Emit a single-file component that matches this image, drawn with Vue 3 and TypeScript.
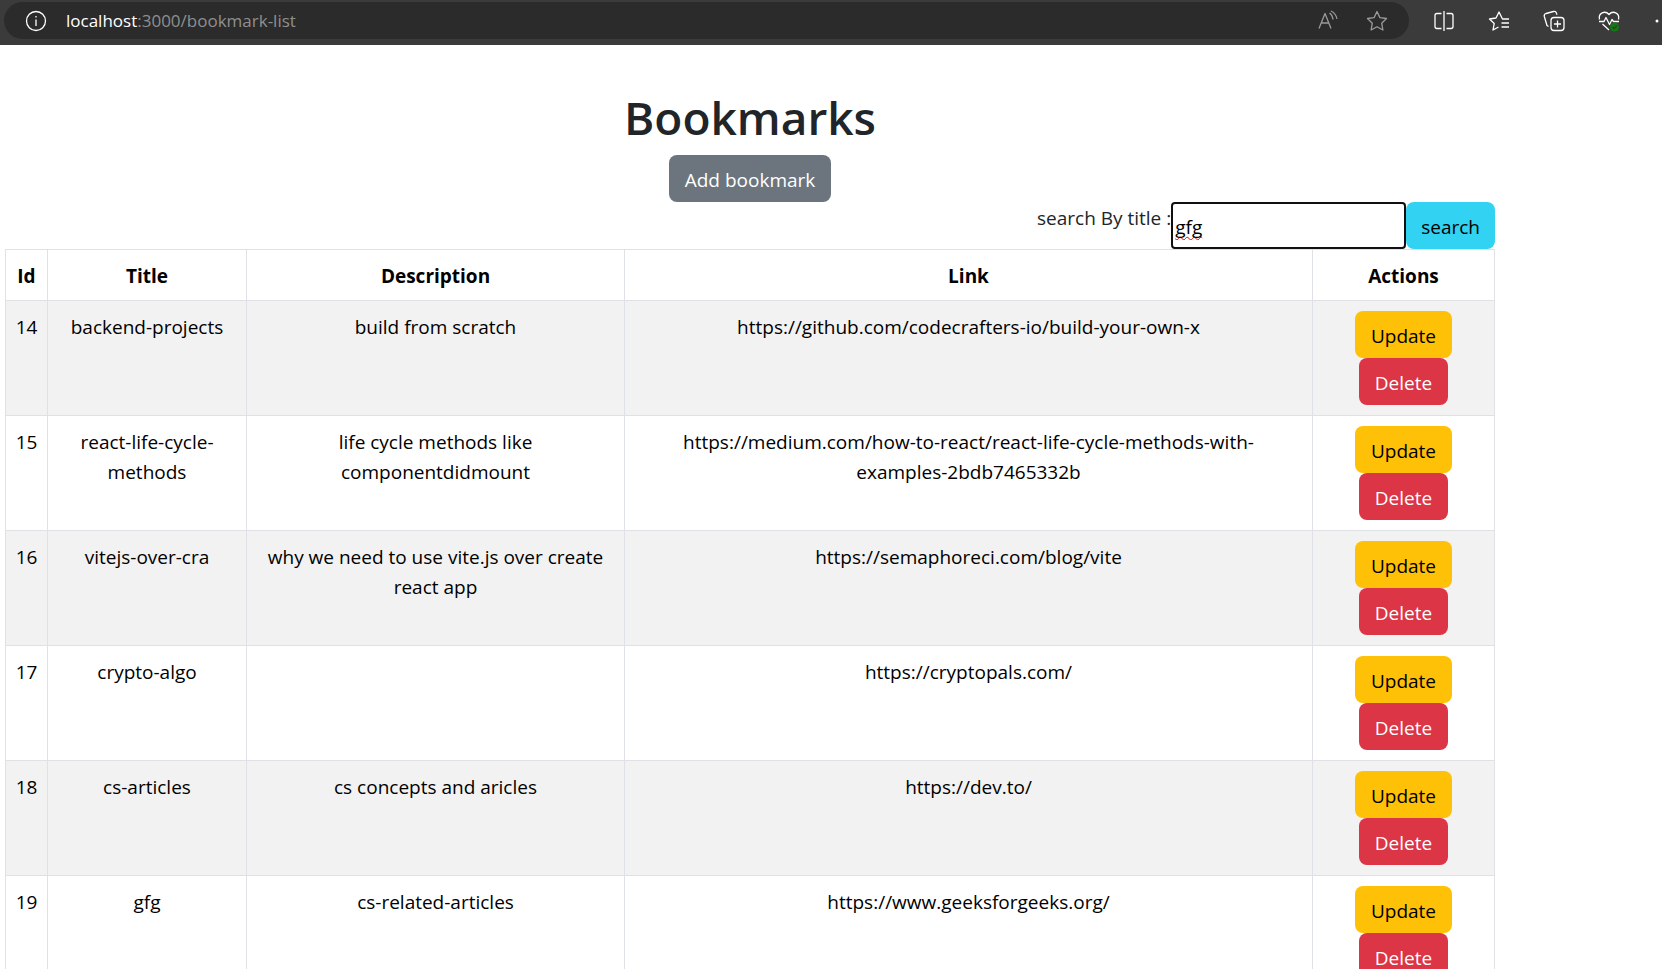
<script setup lang="ts">
import { ref } from 'vue'

interface Bookmark {
  id: number
  title: string
  description: string
  link: string
}

const query = ref('gfg')

const bookmarks = ref<Bookmark[]>([
  { id: 14, title: 'backend-projects', description: 'build from scratch', link: 'https://github.com/codecrafters-io/build-your-own-x' },
  { id: 15, title: 'react-life-cycle-methods', description: 'life cycle methods like componentdidmount', link: 'https://medium.com/how-to-react/react-life-cycle-methods-with-examples-2bdb7465332b' },
  { id: 16, title: 'vitejs-over-cra', description: 'why we need to use vite.js over create react app', link: 'https://semaphoreci.com/blog/vite' },
  { id: 17, title: 'crypto-algo', description: '', link: 'https://cryptopals.com/' },
  { id: 18, title: 'cs-articles', description: 'cs concepts and aricles', link: 'https://dev.to/' },
  { id: 19, title: 'gfg', description: 'cs-related-articles', link: 'https://www.geeksforgeeks.org/' },
])
</script>

<template>
  <div class="window">
    <header class="toolbar">
      <div class="address">
        <button class="tool" type="button" aria-label="Site information">
          <svg viewBox="0 0 24 24"><circle cx="12" cy="12" r="9.5" /><path d="M12 10.5v6.5M12 7v1.5" /></svg>
        </button>
        <span class="url"><span class="host">localhost</span>:3000/bookmark-list</span>
        <button class="tool dim" type="button" aria-label="Read aloud">
          <svg viewBox="0 0 24 24"><path d="M3 19.500L9 4.500L15 19.500M5.200 14h7.600M13.500 4q3 2 3.500 6.500M15 2q5 2.500 6 8" /></svg>
        </button>
        <button class="tool dim" type="button" aria-label="Add to favorites">
          <svg viewBox="0 0 24 24"><path d="M12 2.500l2.900 6.100 6.600.9-4.800 4.700 1.200 6.800-5.900-3.200-5.900 3.200 1.200-6.800-4.800-4.700 6.600-.9z" /></svg>
        </button>
      </div>
      <nav class="tools">
        <button class="tool" type="button" aria-label="Split screen">
          <svg viewBox="0 0 24 24"><path d="M12 2v20M9.500 4.500H5a2 2 0 0 0-2 2v11a2 2 0 0 0 2 2h4.500M14.500 4.500H19a2 2 0 0 1 2 2v11a2 2 0 0 1-2 2h-4.500" /></svg>
        </button>
        <button class="tool" type="button" aria-label="Favorites">
          <svg viewBox="0 0 24 24"><path d="M22 10h-6.500L12 3 9 9l-6.500 1 4.700 4.500L6 21l5.500-3M14.500 14H22M14.500 18H22" /></svg>
        </button>
        <button class="tool" type="button" aria-label="Collections">
          <svg viewBox="0 0 24 24"><rect x="9" y="8.500" width="13" height="13" rx="3" /><path d="M15.500 11.500v7M12 15h7M6.500 17.500L5 16.500 2.300 7.500a2.500 2.500 0 0 1 1.700-3l7.500-2a2.500 2.500 0 0 1 3 1.700l.5 1.500" /></svg>
        </button>
        <button class="tool" type="button" aria-label="Browser essentials">
          <svg viewBox="0 0 24 24"><path d="M2.500 10.500C1 4 8 1 12 5.500 16 1 23 4 21.500 10.500M2 12.500h5l2-4 3.500 7 2.500-5 1.500 2H22M5.500 15l6.500 6" /><circle class="badge" cx="17.500" cy="18" r="4.500" /><path class="tick" d="M15.500 18l1.500 1.500 3-3" /></svg>
        </button>
        <button class="tool" type="button" aria-label="Settings and more">
          <svg viewBox="0 0 24 24"><circle class="dot" cx="5" cy="12" r="1.500" /><circle class="dot" cx="12" cy="12" r="1.500" /><circle class="dot" cx="19" cy="12" r="1.500" /></svg>
        </button>
      </nav>
    </header>

    <main class="page">
      <h1>Bookmarks</h1>
      <button class="btn secondary" type="button">Add bookmark</button>
      <form class="search" @submit.prevent>
        <label for="title-query">search By title :</label>
        <input id="title-query" v-model="query" type="text" />
        <button class="btn info" type="submit">search</button>
      </form>
      <table>
        <colgroup>
          <col class="c-id" /><col class="c-title" /><col class="c-desc" /><col /><col class="c-actions" />
        </colgroup>
        <thead>
          <tr><th>Id</th><th>Title</th><th>Description</th><th>Link</th><th>Actions</th></tr>
        </thead>
        <tbody>
          <tr v-for="item in bookmarks" :key="item.id">
            <td class="id">{{ item.id }}</td>
            <td>{{ item.title }}</td>
            <td>{{ item.description }}</td>
            <td class="link">{{ item.link }}</td>
            <td class="controls">
              <div class="actions">
                <button class="btn warning" type="button">Update</button>
                <button class="btn danger" type="button">Delete</button>
              </div>
            </td>
          </tr>
        </tbody>
      </table>
    </main>
  </div>
</template>

<style>
body {
  margin: 0;
  background: #fff;
}
html {
  height: 100%;
  overflow: hidden;
}
</style>

<style scoped>
.window {
  height: 100vh;
  overflow: hidden;
  font: 19px/30px "Segoe UI", "Open Sans", "Noto Sans", sans-serif;
  color: #212529;
}
.toolbar {
  box-sizing: border-box;
  display: flex;
  height: 45px;
  padding: 2px 0 6px 4px;
  background: #3b3b3b;
  overflow: hidden;
}
.address {
  box-sizing: border-box;
  flex: 1;
  display: flex;
  align-items: center;
  padding: 0 20px;
  border-radius: 19px;
  background: #2b2b2b;
}
.url {
  flex: 1;
  padding-left: 18px;
  font-size: 17px;
  color: #8f8f8f;
}
.host {
  color: #fff;
}
.tool {
  flex: none;
  width: 24px;
  height: 24px;
  padding: 0;
  border: 0;
  background: none;
  color: #fff;
}
.tool svg {
  display: block;
  width: 24px;
  height: 24px;
  fill: none;
  stroke: currentColor;
  stroke-width: 1.3;
  stroke-linejoin: round;
}
.tool.dim {
  color: #9a9a9a;
}
.tool.dim + .tool.dim {
  margin-left: 25px;
}
.tools {
  display: flex;
  align-items: center;
  gap: 31px;
  width: 230px;
  padding-left: 23px;
}
.tool .dot {
  fill: currentColor;
  stroke: none;
}
.tool .badge {
  fill: #107c10;
  stroke: none;
}
.tool .tick {
  stroke: #3b3b3b;
}
.page {
  display: flex;
  flex-direction: column;
  align-items: center;
  margin: 0 167px 0 5px;
  padding-top: 42px;
}
h1 {
  margin: 0 0 8px;
  font-size: 46px;
  line-height: 60px;
  font-weight: 600;
}
.btn {
  box-sizing: border-box;
  height: 47px;
  padding: 2px 16px 0;
  border: 0;
  border-radius: 8px;
  font: inherit;
  color: #fff;
}
.secondary {
  background: #6c757d;
}
.info {
  padding: 2px 15px 0;
  color: #000;
  background: #31d2f2;
}
.warning {
  color: #000;
  background: #ffc107;
}
.danger {
  background: #dc3545;
}
.search {
  display: flex;
  align-self: flex-end;
}
.search label {
  padding-top: 1px;
}
.search input {
  box-sizing: border-box;
  width: 235px;
  height: 47px;
  padding: 2px 2px 0;
  border: 2px solid #101010;
  border-radius: 4px;
  outline: 0;
  background: #fff;
  font: inherit;
  color: #000;
  text-decoration: underline wavy #f00 1px;
  text-decoration-skip-ink: none;
  text-underline-offset: 2px;
}
table {
  width: 100%;
  table-layout: fixed;
  border-collapse: collapse;
  text-align: center;
  color: #000;
}
.c-id {
  width: 42px;
}
.c-title {
  width: 199px;
}
.c-desc {
  width: 378px;
}
.c-actions {
  width: 182px;
}
th,
td {
  padding: 11px 10px 9px;
  border: 1px solid #dee2e6;
  vertical-align: top;
}
th {
  font-weight: 700;
}
.id {
  padding-inline: 8px;
}
.link {
  padding-inline: 24px;
}
.controls {
  padding-block: 10px;
}
tbody tr:nth-child(odd) {
  background: #f2f2f2;
}
.actions {
  display: flex;
  flex-direction: column;
  align-items: center;
}
</style>
